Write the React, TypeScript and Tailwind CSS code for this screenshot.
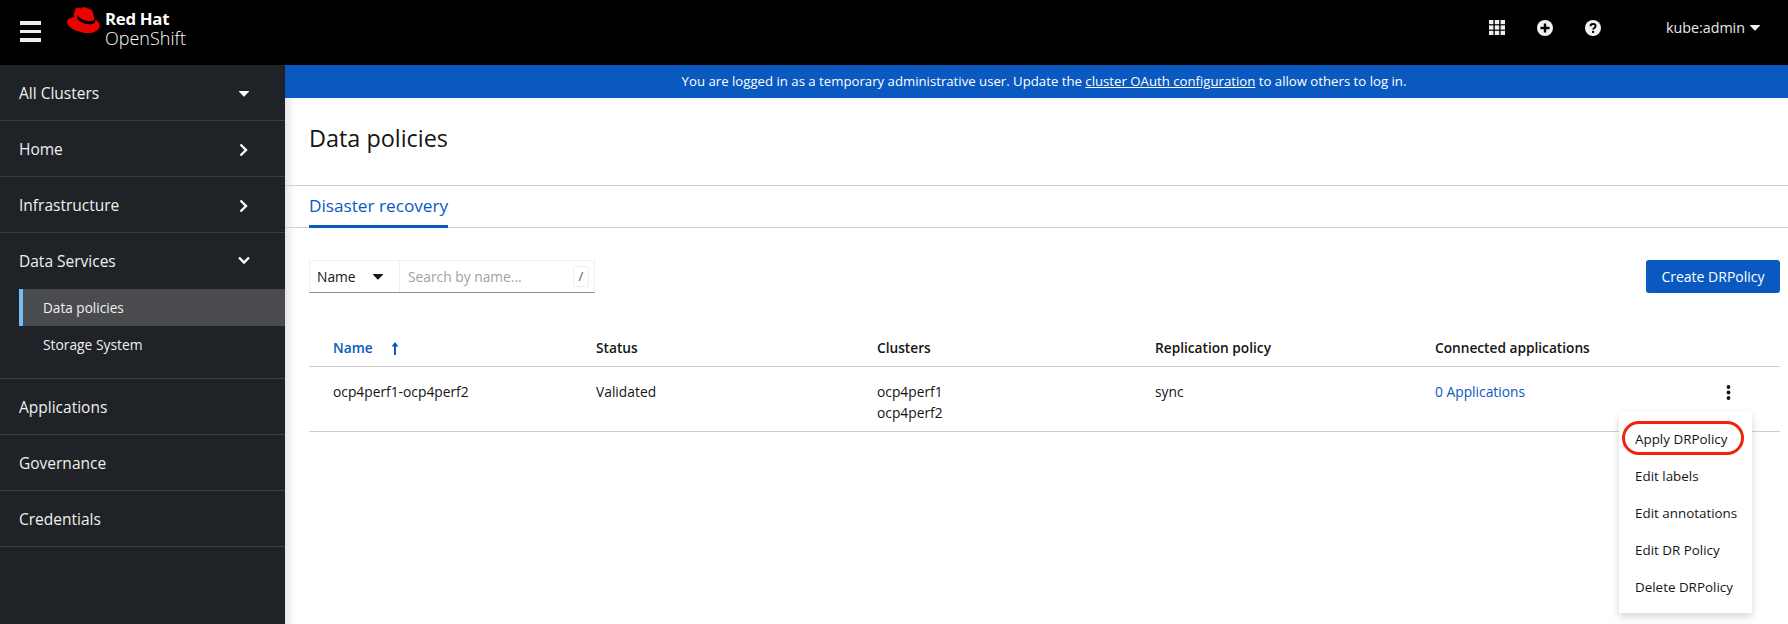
import React from 'react';

const font = "font-['Open_Sans','Liberation_Sans',sans-serif]";

const Caret = ({ className = '' }: { className?: string }) => (
  <svg className={className} width="10" height="6" viewBox="0 0 10 6" fill="currentColor">
    <path d="M0.4 0h9.2c.4 0 .6.4.3.7L5.3 5.6c-.2.2-.5.2-.7 0L.1.7C-.2.4 0 0 .4 0z" />
  </svg>
);

const ChevronRight = () => (
  <svg width="9" height="14" viewBox="0 0 9 14" fill="none" stroke="currentColor" strokeWidth="2.4">
    <path d="M1.5 1.5L7 7l-5.5 5.5" />
  </svg>
);

const ChevronDown = () => (
  <svg width="12" height="9" viewBox="0 0 12 9" fill="none" stroke="currentColor" strokeWidth="2.4">
    <path d="M1 1.5l5 5 5-5" />
  </svg>
);

const RedHatLogo = () => (
  <svg width="33" height="26" viewBox="0 0 33 26">
    <path fill="#e00" d="M22 14.6c2.2 0 5.3-.4 5.3-3 0-.2 0-.4-.1-.6l-1.3-5.700C25.600 4 25.300 3.300 23 2.200 21.200 1.300 17.400 0 16.300 0c-1 0-1.300 1.400-2.600 1.400-1.200 0-2-1-3.100-1-1.100 0-1.800.7-2.300 2.200 0 0-1.500 4.300-1.700 4.900v.3c0 1.700 6.500 7.300 15.400 6.800z" />
    <path fill="#e00" d="M28 12.500c.3 1.200.3 1.400.3 1.500 0 2-2.300 3.200-5.300 3.200C16.200 17.200 10.200 13.200 10.200 10.500c0-.4.100-.8.300-1.100C7.800 9.500 4.300 10 .9 12.500c-.6 1-.9 1.700-.9 2.700C0 19.700 8.500 24.500 18 26c6 1 14-1.500 14.800-7 .3-2.500-1.800-5-4.800-6.500z" />
    <path fill="#000" d="M28 12.500c.3 1.200.3 1.400.3 1.500 0 2-2.300 3.200-5.300 3.200-6.800 0-12.800-4-12.800-6.700 0-.4.100-.8.300-1.100l.6-1.500c-.1.200-.1.400-.1.600 0 1.700 6.500 6.800 15 5.600 1.500-.2 2-.8 1.700-2.400z" />
  </svg>
);

const navTop = [
  { label: 'All Clusters', icon: 'caret' },
  { label: 'Home', icon: 'right' },
  { label: 'Infrastructure', icon: 'right' },
];

const navBottom = ['Applications', 'Governance', 'Credentials'];

const menuItems = ['Edit labels', 'Edit annotations', 'Edit DR Policy', 'Delete DRPolicy'];

const NavRow = ({ label, icon }: { label: string; icon?: string }) => (
  <div className="h-[56px] flex items-center justify-between pt-[2px] pl-[19px] pr-[37px] border-b border-[#3c3f42] text-[15.500px] text-[#f0f0f0]">
    <span>{label}</span>
    {icon === 'caret' && <Caret className="text-white mr-[-1px]" />}
    {icon === 'right' && <span className="text-white"><ChevronRight /></span>}
  </div>
);

export default function App() {
  return (
    <div className={`${font} w-[1788px] h-[624px] overflow-hidden flex flex-col bg-white`}>
      <header className="h-[65px] shrink-0 bg-black flex items-center text-white">
        <div className="w-[42px] ml-[20px] mt-[-2px] flex flex-col gap-[5px]">
          <div className="w-[21px] h-[3.500px] bg-[#eee]" />
          <div className="w-[21px] h-[3.500px] bg-[#eee]" />
          <div className="w-[21px] h-[3.500px] bg-[#eee]" />
        </div>
        <div className="ml-[5px] flex items-start gap-[5px] self-start">
          <div className="mt-[7px]"><RedHatLogo /></div>
          <div className="mt-[9px] flex flex-col">
            <span className="text-[16.800px] leading-[19px] font-bold tracking-[-0.3px]">Red Hat</span>
            <span className="text-[18px] leading-[20px] font-light">OpenShift</span>
          </div>
        </div>
        <div className="ml-auto flex items-center mt-[-10px]">
          <svg width="16" height="15" viewBox="0 0 16 15" fill="#f0f0f0">
            <rect x="0" y="0" width="4.400" height="4.200" /><rect x="5.800" y="0" width="4.400" height="4.200" /><rect x="11.600" y="0" width="4.400" height="4.200" />
            <rect x="0" y="5.400" width="4.400" height="4.200" /><rect x="5.800" y="5.400" width="4.400" height="4.200" /><rect x="11.600" y="5.400" width="4.400" height="4.200" />
            <rect x="0" y="10.800" width="4.400" height="4.200" /><rect x="5.800" y="10.800" width="4.400" height="4.200" /><rect x="11.600" y="10.800" width="4.400" height="4.200" />
          </svg>
          <svg className="ml-[32px]" width="16" height="16" viewBox="0 0 16 16">
            <circle cx="8" cy="8" r="8" fill="#f0f0f0" />
            <path d="M8 3.500v9M3.500 8h9" stroke="#000" strokeWidth="2.400" />
          </svg>
          <svg className="ml-[32px]" width="16" height="16" viewBox="0 0 16 16">
            <circle cx="8" cy="8" r="8" fill="#f0f0f0" />
            <path d="M5.500 6.300c0-1.500 1.100-2.300 2.600-2.300s2.500.8 2.500 2.100c0 1.900-2.500 1.800-2.500 3.500" fill="none" stroke="#000" strokeWidth="1.900" />
            <rect x="7" y="10.800" width="2.100" height="2.100" fill="#000" />
          </svg>
          <span className="ml-[65px] text-[14.300px] text-[#e8e8e8]">kube:admin</span>
          <Caret className="ml-[5px] mr-[28px] text-[#f0f0f0]" />
        </div>
      </header>

      <div className="flex-1 flex min-h-0">
        <nav className="w-[285px] shrink-0 bg-[#1f2327]">
          {navTop.map((n) => <NavRow key={n.label} {...n} />)}
          <div className="h-[146px] border-b border-[#3c3f42]">
            <div className="h-[56px] flex items-center justify-between pt-[2px] pl-[19px] pr-[35px] text-[15.500px] text-[#f0f0f0]">
              <span>Data Services</span>
              <span className="text-white mt-[-3px]"><ChevronDown /></span>
            </div>
            <div className="ml-[19px] h-[37px] flex items-center pt-[2px] pl-[20px] bg-[#4a4b4f] border-l-[4px] border-[#73bcf7] text-[13.600px] text-[#f0f0f0]">
              Data policies
            </div>
            <div className="ml-[19px] h-[37px] flex items-center pt-[2px] pl-[24px] text-[13.800px] text-[#f0f0f0]">Storage System</div>
          </div>
          {navBottom.map((l) => <NavRow key={l} label={l} />)}
        </nav>

        <main className="flex-1 min-w-0 relative shadow-[inset_10px_0_8px_-6px_rgba(0,0,0,0.12)]">
          <div className="h-[33px] bg-[#0a59c1] flex items-center justify-center pl-[15px] pt-[1px] text-[13.200px] text-white">
            <span>You are logged in as a temporary administrative user. Update the <span className="underline">cluster OAuth configuration</span> to allow others to log in.</span>
          </div>
          <div className="h-[88px] border-b border-[#cfcfcf] pl-[24px] pt-[24px] text-[23.400px] text-[#151515] font-medium leading-[32px]">Data policies</div>
          <div className="h-[42px] border-b border-[#cfcfcf] pl-[24px] flex">
            <div className="h-[42px] border-b-[3px] border-[#0a59c1] flex items-center text-[17.200px] text-[#0a59c1]">Disaster recovery</div>
          </div>

          <div className="pl-[24px] pr-[8px] pt-[32px] flex items-start justify-between">
            <div className="flex h-[33px] w-[286px] border border-[#f0f0f0] border-b-[#8a8d90] text-[13.800px]">
              <div className="w-[90px] shrink-0 flex items-center pl-[7px] border-r border-[#f0f0f0] text-[#151515]">
                <span className="mt-[1px]">Name</span>
                <Caret className="ml-[17px] text-[#151515]" />
              </div>
              <div className="flex-1 flex items-center justify-between pl-[8px] pr-[5px] text-[#a0a3a6]">
                <span className="mt-[1px]">Search by name...</span>
                <span className="w-[16px] h-[21px] border border-[#eee] rounded-[2px] flex items-center justify-center text-[#555] text-[13px]">/</span>
              </div>
            </div>
            <button className="w-[134px] h-[33px] rounded-[3px] bg-[#0a59c1] text-white text-[14px]">Create DRPolicy</button>
          </div>

          <div className="ml-[24px] mr-[8px] mt-[32px] text-[13.800px] text-[#151515]">
            <div className="h-[42px] pt-[6px] border-b border-[#cfcfcf] flex items-center font-semibold text-[13.700px]">
              <div className="w-[287px] pl-[24px] flex items-center text-[#0a59c1]">
                <span>Name</span>
                <svg className="ml-[18px]" width="8" height="13" viewBox="0 0 8 13" fill="currentColor">
                  <path d="M4 0l3.500 4.500H5V13H3V4.500H.5z" />
                </svg>
              </div>
              <div className="w-[281px]">Status</div>
              <div className="w-[278px]">Clusters</div>
              <div className="w-[280px]">Replication policy</div>
              <div>Connected applications</div>
            </div>
            <div className="h-[65px] border-b border-[#cfcfcf] flex pt-[14px] leading-[21px]">
              <div className="w-[287px] pl-[24px]">ocp4perf1-ocp4perf2</div>
              <div className="w-[281px]">Validated</div>
              <div className="w-[278px]">
                <div>ocp4perf1</div>
                <div>ocp4perf2</div>
              </div>
              <div className="w-[280px]">sync</div>
              <div className="w-[92px] whitespace-nowrap text-[#0a59c1]">0 Applications</div>
              <svg className="ml-[199px] mt-[4px]" width="5" height="15" viewBox="0 0 5 15" fill="#151515">
                <circle cx="2.500" cy="2" r="1.900" /><circle cx="2.500" cy="7.500" r="1.900" /><circle cx="2.500" cy="13" r="1.900" />
              </svg>
            </div>
          </div>

          <div className="absolute left-[1334px] top-[347px] w-[133px] h-[201px] bg-white shadow-[0_4px_8px_rgba(0,0,0,0.16)] pt-[9px] text-[13.400px] text-[#151515]">
            <div className="h-[37px] flex items-center pl-[16px]">Apply DRPolicy</div>
            {menuItems.map((m) => (
              <div key={m} className="h-[37px] flex items-center pl-[16px]">{m}</div>
            ))}
            <div className="absolute left-[3px] top-[9px] w-[122px] h-[34px] rounded-full border-[3px] border-[#f0230f]" />
          </div>
        </main>
      </div>
    </div>
  );
}
